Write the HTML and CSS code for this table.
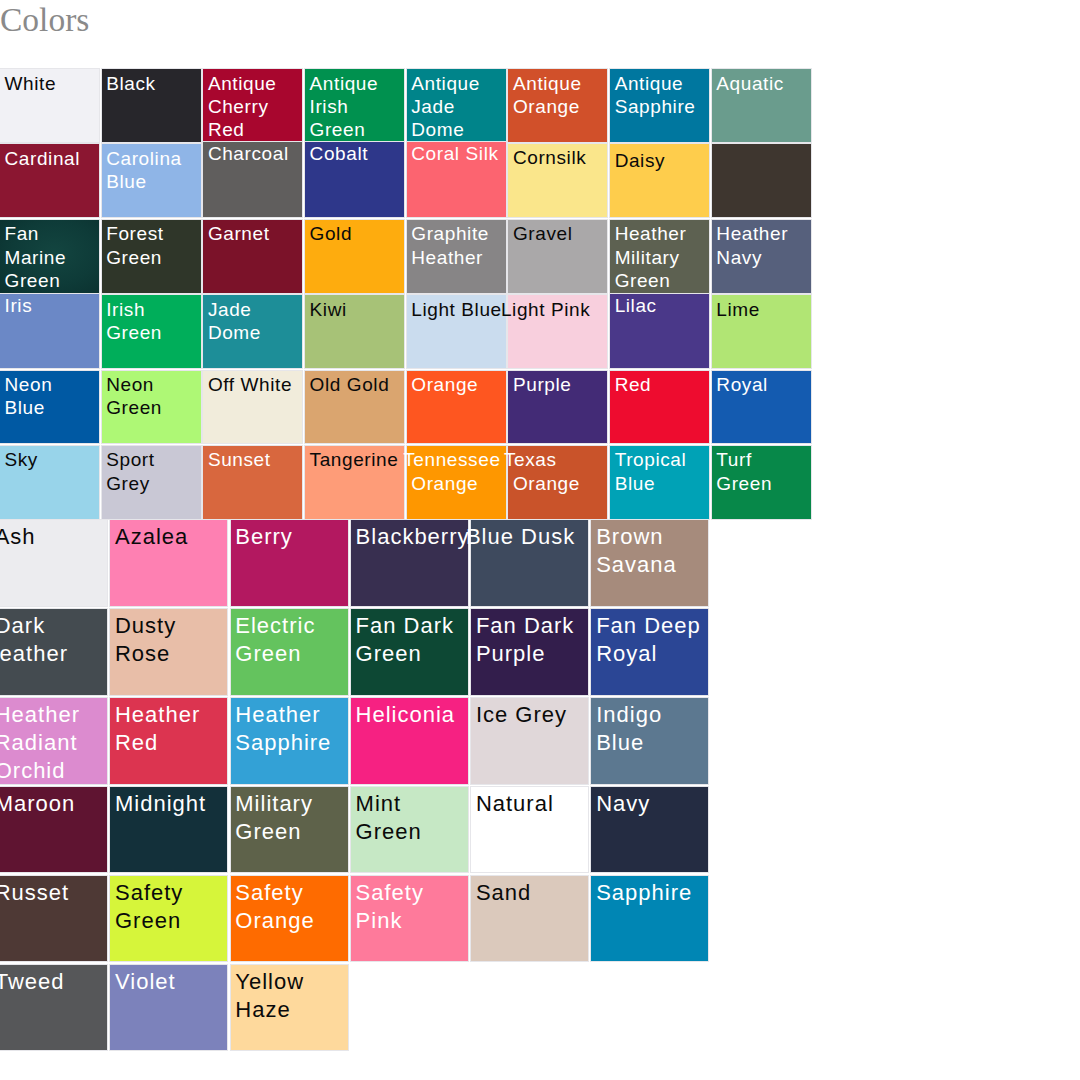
FILE: index.html
```html
<!DOCTYPE html>
<html lang="en">
<head>
<meta charset="utf-8">
<title>Colors</title>
<link rel="stylesheet" href="styles.css">
</head>
<body>
<h1 class="title">Colors</h1>

<div class="chart chart-small">
  <div class="sw dark-text c-white">White</div>
  <div class="sw c-black">Black</div>
  <div class="sw c-antique-cherry">Antique Cherry Red</div>
  <div class="sw c-antique-irish">Antique Irish Green</div>
  <div class="sw c-antique-jade">Antique Jade Dome</div>
  <div class="sw c-antique-orange">Antique Orange</div>
  <div class="sw c-antique-sapphire">Antique Sapphire</div>
  <div class="sw c-aquatic">Aquatic</div>

  <div class="sw c-cardinal">Cardinal</div>
  <div class="sw c-carolina">Carolina Blue</div>
  <div class="sw up5 c-charcoal">Charcoal</div>
  <div class="sw up5 c-cobalt">Cobalt</div>
  <div class="sw up5 c-coral">Coral Silk</div>
  <div class="sw dark-text up1 c-cornsilk">Cornsilk</div>
  <div class="sw dark-text dn2 c-daisy">Daisy</div>
  <div class="sw c-dark-choc"></div>

  <div class="sw c-fan-marine">Fan Marine Green</div>
  <div class="sw c-forest">Forest Green</div>
  <div class="sw c-garnet">Garnet</div>
  <div class="sw dark-text c-gold">Gold</div>
  <div class="sw c-graphite">Graphite Heather</div>
  <div class="sw dark-text c-gravel">Gravel</div>
  <div class="sw c-heather-military">Heather Military Green</div>
  <div class="sw c-heather-navy">Heather Navy</div>

  <div class="sw up4 c-iris">Iris</div>
  <div class="sw c-irish">Irish Green</div>
  <div class="sw c-jade">Jade Dome</div>
  <div class="sw dark-text c-kiwi">Kiwi</div>
  <div class="sw dark-text nowrap c-light-blue">Light Blue</div>
  <div class="sw dark-text nowrap pull12 c-light-pink">Light Pink</div>
  <div class="sw up4 c-lilac">Lilac</div>
  <div class="sw dark-text c-lime">Lime</div>

  <div class="sw c-neon-blue">Neon Blue</div>
  <div class="sw dark-text c-neon-green">Neon Green</div>
  <div class="sw dark-text c-off-white">Off White</div>
  <div class="sw dark-text c-old-gold">Old Gold</div>
  <div class="sw c-orange">Orange</div>
  <div class="sw c-purple">Purple</div>
  <div class="sw c-red">Red</div>
  <div class="sw c-royal">Royal</div>

  <div class="sw dark-text c-sky">Sky</div>
  <div class="sw dark-text c-sport-grey">Sport Grey</div>
  <div class="sw c-sunset">Sunset</div>
  <div class="sw dark-text c-tangerine">Tangerine</div>
  <div class="sw pull8 c-tennessee">Tennessee Orange</div>
  <div class="sw pull9 c-texas">Texas Orange</div>
  <div class="sw c-tropical">Tropical Blue</div>
  <div class="sw c-turf">Turf Green</div>
</div>

<div class="chart chart-large">
  <div class="sw dark-text c-ash">Ash</div>
  <div class="sw dark-text c-azalea">Azalea</div>
  <div class="sw c-berry">Berry</div>
  <div class="sw c-blackberry">Blackberry</div>
  <div class="sw pull10 c-blue-dusk">Blue Dusk</div>
  <div class="sw c-brown-savana">Brown Savana</div>

  <div class="sw c-dark-heather">Dark<br><span class="shift">Heather</span></div>
  <div class="sw dark-text c-dusty-rose">Dusty Rose</div>
  <div class="sw c-electric-green">Electric Green</div>
  <div class="sw c-fan-dark-green">Fan Dark Green</div>
  <div class="sw c-fan-dark-purple">Fan Dark Purple</div>
  <div class="sw c-fan-deep-royal">Fan Deep Royal</div>

  <div class="sw c-radiant-orchid">Heather Radiant Orchid</div>
  <div class="sw c-heather-red">Heather Red</div>
  <div class="sw c-heather-sapphire">Heather Sapphire</div>
  <div class="sw c-heliconia">Heliconia</div>
  <div class="sw dark-text c-ice-grey">Ice Grey</div>
  <div class="sw c-indigo-blue">Indigo Blue</div>

  <div class="sw c-maroon">Maroon</div>
  <div class="sw c-midnight">Midnight</div>
  <div class="sw c-military-green">Military Green</div>
  <div class="sw dark-text c-mint-green">Mint Green</div>
  <div class="sw dark-text c-natural">Natural</div>
  <div class="sw c-navy">Navy</div>

  <div class="sw c-russet">Russet</div>
  <div class="sw dark-text c-safety-green">Safety Green</div>
  <div class="sw c-safety-orange">Safety Orange</div>
  <div class="sw c-safety-pink">Safety Pink</div>
  <div class="sw dark-text c-sand">Sand</div>
  <div class="sw c-sapphire">Sapphire</div>

  <div class="sw c-tweed">Tweed</div>
  <div class="sw c-violet">Violet</div>
  <div class="sw dark-text c-yellow-haze">Yellow Haze</div>
</div>
</body>
</html>
```

FILE: styles.css
```css
html, body {
  margin: 0;
  padding: 0;
  background: #ffffff;
}

body {
  width: 1080px;
  height: 1080px;
  overflow: hidden;
}

.title {
  margin: 0 0 29px 0;
  font-family: "Liberation Serif", "Times New Roman", serif;
  font-weight: normal;
  font-size: 33.5px;
  line-height: 40px;
  color: #8a8a8a;
}

.chart {
  display: grid;
  font-family: "Liberation Sans", Arial, sans-serif;
  color: #ffffff;
}

.chart-small {
  grid-template-columns: repeat(8, 99px);
  grid-auto-rows: 72.8px;
  column-gap: 2.7px;
  row-gap: 2.6px;
  font-size: 19px;
  line-height: 23.3px;
  letter-spacing: 0.6px;
}

.chart-large {
  margin-top: 1.7px;
  margin-left: -10px;
  grid-template-columns: repeat(6, 117px);
  grid-auto-rows: 85.3px;
  column-gap: 3.3px;
  row-gap: 3.6px;
  font-size: 22px;
  line-height: 28px;
  letter-spacing: 1px;
}

.sw {
  box-sizing: border-box;
  padding: 2.5px 4px 0 4.5px;
  box-shadow: 0 0 0 1px #e6e6ea;
  white-space: normal;
}

.chart-large .sw {
  padding: 3px 4px 0 4.7px;
}

.dark-text { color: #0a0a0a; }
.nowrap { white-space: nowrap; }

.up5 { padding-top: 0; margin-top: -2.5px; }
.up4 { padding-top: 0; margin-top: -1.5px; }
.up1 { padding-top: 1.5px; }
.dn2 { padding-top: 4.5px; }

.pull8 { text-indent: -8px; }
.pull9 { text-indent: -9px; }
.pull10 { text-indent: -10px; }
.pull12 { text-indent: -12px; }

.shift {
  display: inline-block;
  margin-left: -12px;
}

/* small chart colours */
.c-white { background: #f1f1f5; }
.c-black { background: #27262b; }
.c-antique-cherry { background: #a8062e; }
.c-antique-irish { background: #00914f; }
.c-antique-jade { background: #00848a; }
.c-antique-orange { background: #d1502a; }
.c-antique-sapphire { background: #00779f; }
.c-aquatic { background: #6a9c8d; }

.c-cardinal { background: #8b1631; }
.c-carolina { background: #8fb5e7; }
.c-charcoal { background: #605e5d; }
.c-cobalt { background: #2e378a; }
.c-coral { background: #fc6470; }
.c-cornsilk { background: #fae68b; }
.c-daisy { background: #fecd4c; }
.c-dark-choc { background: #3e362f; }

.c-fan-marine { background: radial-gradient(ellipse at 55% 45%, #134540 0%, #0e3b38 55%, #0a302e 100%); }
.c-forest { background: #2f3629; }
.c-garnet { background: #7b1229; }
.c-gold { background: #feac0e; }
.c-graphite { background: #878586; }
.c-gravel { background: #aaa8a9; }
.c-heather-military { background: #5d6151; }
.c-heather-navy { background: #56607c; }

.c-iris { background: #6b88c6; }
.c-irish { background: #00ae5a; }
.c-jade { background: #1d8e98; }
.c-kiwi { background: #a7c277; }
.c-light-blue { background: #cadcee; }
.c-light-pink { background: #f8cfdd; }
.c-lilac { background: #4a3889; }
.c-lime { background: #b1e574; }

.c-neon-blue { background: #0059a3; }
.c-neon-green { background: #aef875; }
.c-off-white { background: #f1ecdb; }
.c-old-gold { background: #daa56f; }
.c-orange { background: #fe5620; }
.c-purple { background: #432b76; }
.c-red { background: #ee0c2f; }
.c-royal { background: #145bb0; }

.c-sky { background: #98d4ea; }
.c-sport-grey { background: #c9c8d5; }
.c-sunset { background: #d8673e; }
.c-tangerine { background: #fe9c78; }
.c-tennessee { background: #fe9700; }
.c-texas { background: #c9532a; }
.c-tropical { background: #00a2b6; }
.c-turf { background: #078849; }

/* large chart colours */
.c-ash { background: #ececef; }
.c-azalea { background: #fe80b2; }
.c-berry { background: #b31860; }
.c-blackberry { background: #382f50; }
.c-blue-dusk { background: #3e4a5e; }
.c-brown-savana { background: #a68b7c; }

.c-dark-heather { background: #444b50; }
.c-dusty-rose { background: #e8bea8; }
.c-electric-green { background: #64c35e; }
.c-fan-dark-green { background: #0d4834; }
.c-fan-dark-purple { background: #331e4c; }
.c-fan-deep-royal { background: #2b4695; }

.c-radiant-orchid { background: #dc8bcf; }
.c-heather-red { background: #dc3450; }
.c-heather-sapphire { background: #33a1d6; }
.c-heliconia { background: #f62182; }
.c-ice-grey { background: #e0d7d9; }
.c-indigo-blue { background: #5c7890; }

.c-maroon { background: #5f1431; }
.c-midnight { background: #13303a; }
.c-military-green { background: #5e624a; }
.c-mint-green { background: #c6e8c5; }
.c-natural { background: #ffffff; }
.c-navy { background: #242c42; }

.c-russet { background: #4e3935; }
.c-safety-green { background: #d6f53a; }
.c-safety-orange { background: #fe6b00; }
.c-safety-pink { background: #fe7a9b; }
.c-sand { background: #dbc9bc; }
.c-sapphire { background: #0086b4; }

.c-tweed { background: #565759; }
.c-violet { background: #7c82bb; }
.c-yellow-haze { background: #fed99c; }
```
